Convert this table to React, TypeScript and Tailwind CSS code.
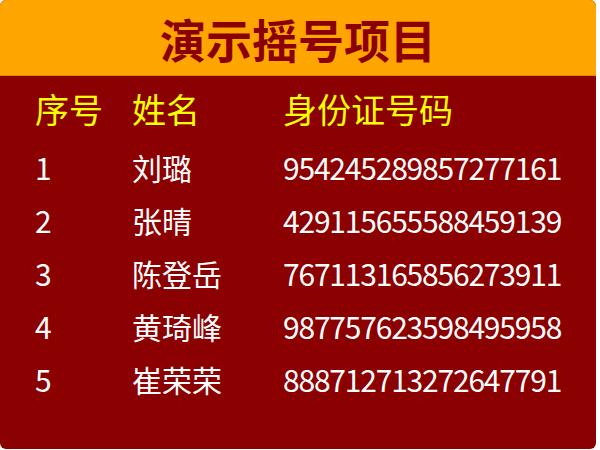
export default function App() {
  const rows = [
    ["1", "刘璐", "954245289857277161"],
    ["2", "张晴", "429115655588459139"],
    ["3", "陈登岳", "767113165856273911"],
    ["4", "黄琦峰", "987757623598495958"],
    ["5", "崔荣荣", "888712713272647791"],
  ];
  return (
    <div
      className="w-[600px] h-[450px] bg-white"
      style={{ fontFamily: '"Noto Sans CJK SC", "Noto Sans", sans-serif' }}
    >
      <div className="w-[596px] h-[449px] rounded-md overflow-hidden flex flex-col bg-[#8b0000]">
        <div className="h-[76px] shrink-0 bg-[#ffa500] border-b border-[#e08a00] flex items-center justify-center">
          <span className="text-[46px] font-bold text-[#8b0000] leading-none">演示摇号项目</span>
        </div>
        <div className="pt-[2px] pl-[35px]">
          <div className="grid grid-cols-[97px_151px_1fr] h-[62px] items-center text-[34px] text-[#ffff00] leading-none">
            <span>序号</span>
            <span>姓名</span>
            <span>身份证号码</span>
          </div>
          {rows.map((r) => (
            <div
              key={r[0]}
              className="grid grid-cols-[97px_151px_1fr] h-[53px] items-center text-[30px] text-white leading-none"
            >
              <span>{r[0]}</span>
              <span>{r[1]}</span>
              <span className="tracking-[-1.2px]">{r[2]}</span>
            </div>
          ))}
        </div>
      </div>
    </div>
  );
}
